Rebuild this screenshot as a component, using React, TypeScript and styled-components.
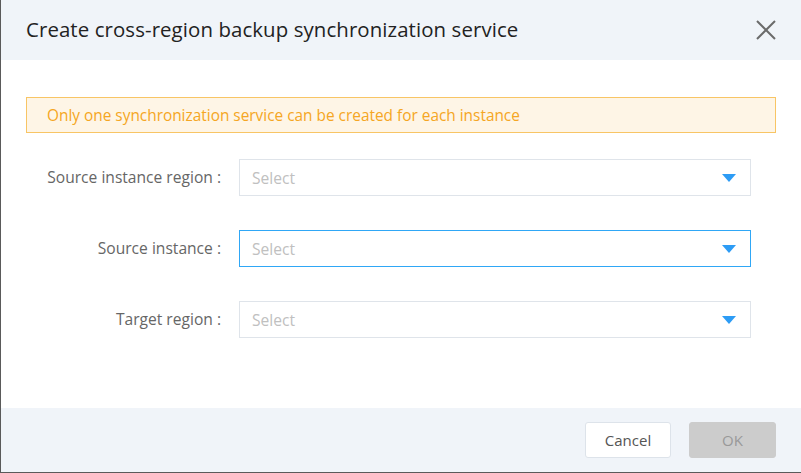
import React from "react";
import styled, { createGlobalStyle } from "styled-components";

const Global = createGlobalStyle`
  html, body { margin: 0; padding: 0; background: #ffffff; }
  body { font-family: "Open Sans", "Noto Sans", Arial, sans-serif; }
  * { box-sizing: border-box; }
`;

const Dialog = styled.div`
  width: 801px;
  height: 473px;
  display: flex;
  flex-direction: column;
  border-left: 1px solid #5a5a5a;
  border-bottom: 1px solid #5a5a5a;
  background: #fff;
`;

const Header = styled.div`
  height: 60px;
  flex: none;
  background: #f0f4f9;
  display: flex;
  align-items: center;
  justify-content: space-between;
  padding: 0 24px 0 25px;
`;

const Title = styled.div`
  font-size: 20.4px;
  color: #222;
  letter-spacing: 0.1px;
  padding-bottom: 3px;
`;

const Close = styled.button`
  border: 0;
  background: transparent;
  padding: 0;
  width: 22px;
  height: 22px;
  display: flex;
  cursor: pointer;
`;

const Body = styled.div`
  flex: 1;
  padding: 37px 25px 0 25px;
  display: flex;
  flex-direction: column;
`;

const Alert = styled.div`
  height: 36px;
  border: 1px solid #f8c565;
  background: #fef5e6;
  color: #f5a623;
  font-size: 15.4px;
  display: flex;
  align-items: center;
  padding-left: 20px;
  margin-bottom: 26px;
`;

const Form = styled.div`
  display: grid;
  grid-template-columns: 213px 512px;
  row-gap: 34px;
  align-items: center;
`;

const Label = styled.div`
  text-align: right;
  padding-right: 18px;
  color: #666;
  font-size: 15.6px;
  padding-bottom: 2px;
`;

const Select = styled.div<{ $active?: boolean }>`
  height: 37px;
  border: 1px solid ${(p) => (p.$active ? "#2fa7f6" : "#dfe4ea")};
  display: flex;
  align-items: center;
  justify-content: space-between;
  padding: 0 14px 0 12px;
  color: #c0c0c0;
  font-size: 15.6px;
  background: #fff;
`;

const Footer = styled.div`
  height: 64px;
  flex: none;
  background: #f0f4f9;
  display: flex;
  align-items: center;
  justify-content: flex-end;
  gap: 18px;
  padding-right: 25px;
`;

const Button = styled.button<{ $primary?: boolean }>`
  height: 36px;
  width: ${(p) => (p.$primary ? "87px" : "86px")};
  border-radius: 3px;
  font-family: inherit;
  font-size: 15px;
  border: 1px solid ${(p) => (p.$primary ? "#cccccc" : "#dde3ea")};
  background: ${(p) => (p.$primary ? "#cccccc" : "#ffffff")};
  color: ${(p) => (p.$primary ? "#999999" : "#555555")};
`;

const Arrow = () => (
  <svg width="14" height="8" viewBox="0 0 14 8">
    <path d="M0 0 H14 L7 8 Z" fill="#2d9cf5" />
  </svg>
);

const rows = [
  { label: "Source instance region :", active: false },
  { label: "Source instance :", active: true },
  { label: "Target region :", active: false },
];

export default function App() {
  return (
    <>
      <Global />
      <Dialog>
        <Header>
          <Title>Create cross-region backup synchronization service</Title>
          <Close aria-label="close">
            <svg width="22" height="22" viewBox="0 0 22 22">
              <path d="M2 2 L20 20 M20 2 L2 20" stroke="#6b6b6b" strokeWidth="2" />
            </svg>
          </Close>
        </Header>
        <Body>
          <Alert>Only one synchronization service can be created for each instance</Alert>
          <Form>
            {rows.map((r) => (
              <React.Fragment key={r.label}>
                <Label>{r.label}</Label>
                <Select $active={r.active}>
                  <span>Select</span>
                  <Arrow />
                </Select>
              </React.Fragment>
            ))}
          </Form>
        </Body>
        <Footer>
          <Button>Cancel</Button>
          <Button $primary>OK</Button>
        </Footer>
      </Dialog>
    </>
  );
}
